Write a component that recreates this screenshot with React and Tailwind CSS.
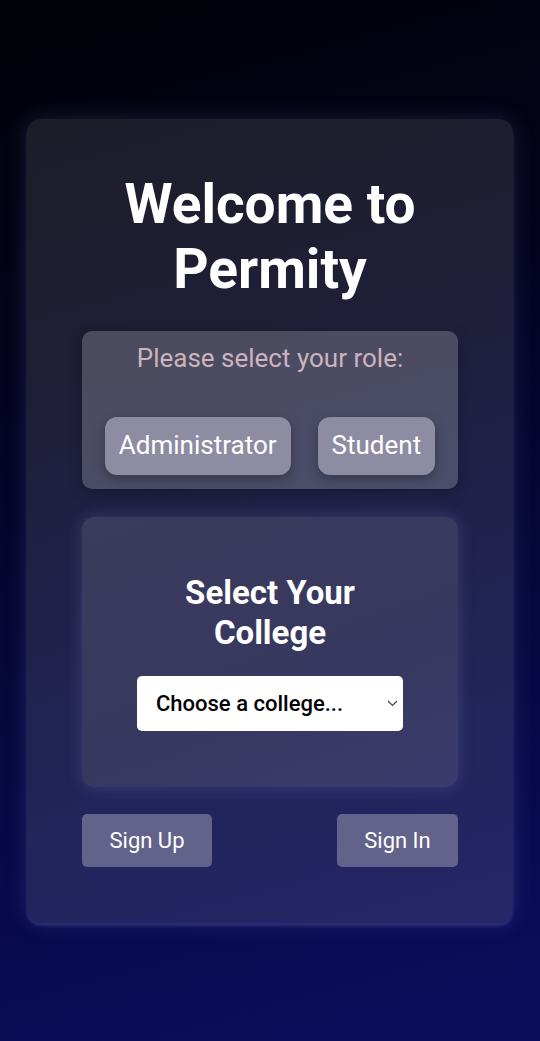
import { useState } from 'react';

export default function App() {
  const [role, setRole] = useState(null);
  const [college, setCollege] = useState('');

  return (
    <div
      className="min-h-screen w-full flex items-center justify-center px-[27px] bg-[linear-gradient(165deg,#020208_0%,#03031c_30%,#070946_70%,#0b0e5e_100%)]"
      style={{ fontFamily: 'Roboto, "Noto Sans", Arial, sans-serif' }}
    >
      <div className="w-full rounded-[14px] bg-white/[0.11] shadow-[0_3px_3px_rgba(150,150,230,0.2),0_0_22px_rgba(150,150,220,0.18)] px-[55px] pt-[53px] pb-[56px]">
        {/* Heading */}
        <h1 className="text-center text-white font-bold text-[55px] leading-[65px]">
          Welcome to
          <br />
          Permity
        </h1>

        {/* Role picker */}
        <div className="mt-[29px] rounded-[10px] bg-white/[0.2] shadow-[0_4px_14px_rgba(0,0,0,0.25)] pt-[11px] pb-[14px]">
          <p className="text-center text-[26px] leading-[32px] text-[#cbb4bd]">
            Please select your role:
          </p>
          <div className="mt-[43px] flex justify-center gap-[27px]">
            <button
              onClick={() => setRole('admin')}
              className="h-[58px] px-[14px] rounded-[12px] bg-[#8d8ca2] text-white text-[26px] shadow-[0_4px_12px_rgba(0,0,0,0.3)]"
            >
              Administrator
            </button>
            <button
              onClick={() => setRole('student')}
              className="h-[58px] px-[14px] rounded-[12px] bg-[#8d8ca2] text-white text-[26px] shadow-[0_4px_12px_rgba(0,0,0,0.3)]"
            >
              Student
            </button>
          </div>
        </div>

        {/* College picker */}
        <div className="mt-[28px] rounded-[12px] bg-[linear-gradient(160deg,#3b3b5c_0%,#37385f_60%,#3a3b6c_100%)] shadow-[0_0_16px_rgba(160,160,230,0.22)] pt-[56px] pb-[56px] flex flex-col items-center">
          <h2 className="text-center text-white font-bold text-[33px] leading-[40px]">
            Select Your
            <br />
            College
          </h2>
          <div className="relative mt-[23px] w-[266px] h-[55px]">
            <select
              value={college}
              onChange={(e) => setCollege(e.target.value)}
              className="appearance-none w-full h-full rounded-[5px] bg-white text-black text-[22px] font-medium pl-[19px] pr-[30px] outline-none"
              style={{ fontFamily: 'Roboto, Arial, sans-serif' }}
            >
              <option value="">Choose a college...</option>
            </select>
            <svg
              className="pointer-events-none absolute right-[5px] top-[24px]"
              width="11"
              height="7"
              viewBox="0 0 11 7"
              fill="none"
              stroke="#444"
              strokeWidth="1.2"
            >
              <path d="M1 1l4.5 4.5L10 1" />
            </svg>
          </div>
        </div>

        {/* Auth buttons */}
        <div className="mt-[27px] flex justify-between">
          <button className="h-[53px] w-[130px] rounded-[5px] bg-[#62628a] text-white text-[22px]">
            Sign Up
          </button>
          <button className="h-[53px] w-[121px] rounded-[5px] bg-[#62628a] text-white text-[22px]">
            Sign In
          </button>
        </div>
      </div>
    </div>
  );
}
